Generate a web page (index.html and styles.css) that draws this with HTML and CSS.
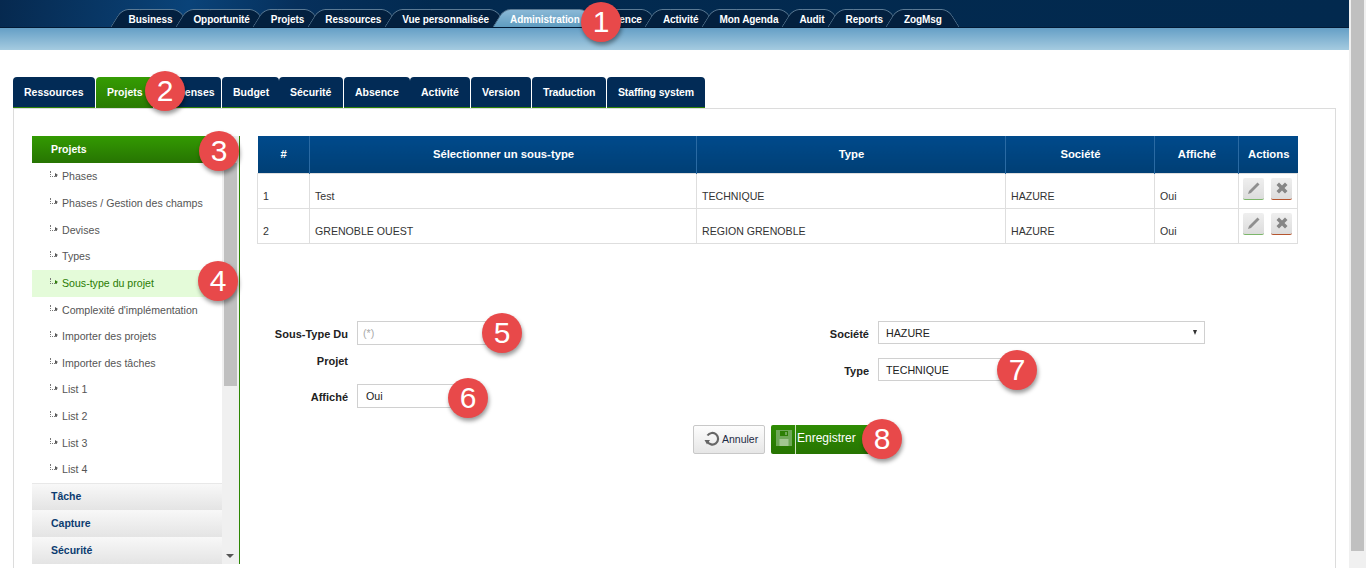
FILE: index.html
```html
<!DOCTYPE html>
<html lang="fr">
<head>
	<meta charset="UTF-8">
	<title>Administration - Sous-type du projet</title>
	<link rel="stylesheet" href="styles.css">
</head>
<body>
	<div class="page">
		<div class="topbar">
			<ul class="mainmenu">
				<li><span>Business</span></li>
				<li><span>Opportunité</span></li>
				<li><span>Projets</span></li>
				<li><span>Ressources</span></li>
				<li><span>Vue personnalisée</span></li>
				<li class="active"><span>Administration</span></li>
				<li><span>Absence</span></li>
				<li><span>Activité</span></li>
				<li><span>Mon Agenda</span></li>
				<li><span>Audit</span></li>
				<li><span>Reports</span></li>
				<li><span>ZogMsg</span></li>
			</ul>
		</div>
		<div class="subbar"></div>

		<ul class="tabs">
			<li class="t-res">Ressources</li>
			<li class="t-pro active">Projets</li>
			<li class="t-dep">Dépenses</li>
			<li class="t-bud">Budget</li>
			<li class="t-sec">Sécurité</li>
			<li class="t-abs">Absence</li>
			<li class="t-act">Activité</li>
			<li class="t-ver">Version</li>
			<li class="t-tra">Traduction</li>
			<li class="t-sta">Staffing system</li>
		</ul>

		<div class="panel">
			<div class="sidebar">
				<div class="side-list">
					<div class="side-head active">Projets</div>
					<ul class="side-items">
						<li>Phases</li>
						<li>Phases / Gestion des champs</li>
						<li>Devises</li>
						<li>Types</li>
						<li class="active">Sous-type du projet</li>
						<li>Complexité d'implémentation</li>
						<li>Importer des projets</li>
						<li>Importer des tâches</li>
						<li>List 1</li>
						<li>List 2</li>
						<li>List 3</li>
						<li>List 4</li>
					</ul>
					<div class="side-head first">Tâche</div>
					<div class="side-head">Capture</div>
					<div class="side-head">Sécurité</div>
				</div>
				<div class="side-scroll">
					<div class="side-thumb"></div>
					<div class="side-arrow"></div>
				</div>
			</div>

			<div class="content">
				<table class="grid">
					<thead>
						<tr>
							<th class="c-num">#</th>
							<th class="c-name">Sélectionner un sous-type</th>
							<th class="c-type">Type</th>
							<th class="c-soc">Société</th>
							<th class="c-aff">Affiché</th>
							<th class="c-act">Actions</th>
						</tr>
					</thead>
					<tbody>
						<tr>
							<td>1</td>
							<td>Test</td>
							<td>TECHNIQUE</td>
							<td>HAZURE</td>
							<td>Oui</td>
							<td class="actions">
								<span class="act edit"><svg width="16" height="16" viewBox="0 0 16 16"><path d="M2 14l1-3 8.500-8.500 2 2L5 13z" fill="#8f8f8f"/></svg></span>
								<span class="act del"><svg width="16" height="16" viewBox="0 0 16 16"><path d="M2.500 5L5 2.500l3 3 3-3L13.500 5l-3 3 3 3-2.500 2.500-3-3-3 3L2.500 11l3-3z" fill="#868686"/></svg></span>
							</td>
						</tr>
						<tr>
							<td>2</td>
							<td>GRENOBLE OUEST</td>
							<td>REGION GRENOBLE</td>
							<td>HAZURE</td>
							<td>Oui</td>
							<td class="actions">
								<span class="act edit"><svg width="16" height="16" viewBox="0 0 16 16"><path d="M2 14l1-3 8.500-8.500 2 2L5 13z" fill="#8f8f8f"/></svg></span>
								<span class="act del"><svg width="16" height="16" viewBox="0 0 16 16"><path d="M2.500 5L5 2.500l3 3 3-3L13.500 5l-3 3 3 3-2.500 2.500-3-3-3 3L2.500 11l3-3z" fill="#868686"/></svg></span>
							</td>
						</tr>
					</tbody>
				</table>

				<div class="form">
					<div class="form-col left">
						<div class="field">
							<label>Sous-Type Du Projet</label>
							<div class="input placeholder w-short">(*)</div>
						</div>
						<div class="field field-aff">
							<label>Affiché</label>
							<div class="input w-short2">Oui</div>
						</div>
					</div>
					<div class="form-col right">
						<div class="field">
							<label>Société</label>
							<div class="input w-long">HAZURE<span class="caret"></span></div>
						</div>
						<div class="field">
							<label>Type</label>
							<div class="input w-type">TECHNIQUE</div>
						</div>
					</div>
				</div>

				<div class="buttons">
					<div class="btn-cancel">
						<svg width="16" height="16" viewBox="0 0 16 16"><path d="M3.200 10.500A5.800 5.800 0 1 0 3.500 4.500" fill="none" stroke="#666" stroke-width="2.200"/><path d="M0.500 9h5.500l-3 4.500z" fill="#666"/></svg>
						Annuler
					</div>
					<div class="btn-save">
						<span class="save-icon"><svg width="16" height="16" viewBox="0 0 16 16"><path d="M0 0h16v16H0z" fill="#6fa858"/><path d="M4 1h8v5H4z" fill="#2d7f05"/><path d="M9 2h2v3H9z" fill="#6fa858"/><path d="M3.500 9h9v7h-9z" fill="#a3c792"/></svg></span>
						<span>Enregistrer</span>
					</div>
				</div>
			</div>
		</div>
	</div>

	<div class="pagescroll"><div class="pagescroll-thumb"></div></div>

	<span class="badge b1">1</span>
	<span class="badge b2">2</span>
	<span class="badge b3">3</span>
	<span class="badge b4">4</span>
	<span class="badge b5">5</span>
	<span class="badge b6">6</span>
	<span class="badge b7">7</span>
	<span class="badge b8">8</span>
</body>
</html>
```

FILE: styles.css
```css
*{
	margin: 0;
	padding: 0;
	box-sizing: border-box;
}
html,body{
	height: 568px;
	overflow: hidden;
}
body{
	font-family: "Liberation Sans", Arial, sans-serif;
	font-size: 11px;
	color: #333;
	background: #fff;
	position: relative;
}
ul{
	list-style: none;
}
.page{
	width: 1349px;
	height: 568px;
	overflow: hidden;
}

/* top menu */
.topbar{
	height: 28px;
	background: linear-gradient(100deg, #06294f 0, #0a4379 14%, #06305c 22%, #022a50 32%, #02294e 100%);
	padding: 9px 0 0 118px;
	border-bottom: 1px solid #021a35;
}
.mainmenu{
	display: flex;
	height: 18px;
}
.mainmenu li{
	position: relative;
	height: 18px;
	line-height: 21px;
	padding: 0 10.500px;
	font-size: 10px;
	letter-spacing: -0.070px;
	font-weight: bold;
	color: #fff;
	white-space: nowrap;
}
.mainmenu li span{
	position: relative;
	z-index: 2;
}
.mainmenu li::before,
.mainmenu li::after{
	content: "";
	position: absolute;
	top: 0;
	bottom: 0;
	width: 60%;
	background: #03203f;
	border-top: 1px solid #5b7a94;
	z-index: 1;
}
.mainmenu li::before{
	left: -2px;
	border-left: 1px solid #5b7a94;
	border-radius: 7px 0 0 0;
	transform: skewX(-32deg);
}
.mainmenu li::after{
	right: -2px;
	border-right: 1px solid #5b7a94;
	border-radius: 0 7px 0 0;
	transform: skewX(32deg);
}
.mainmenu li.active::before,
.mainmenu li.active::after{
	background: linear-gradient(#8ab8d6, #5f9cc0);
}

.subbar{
	height: 22px;
	background: linear-gradient(#659fc6, #a5cbe0);
}

/* second level tabs */
.tabs{
	display: flex;
	margin: 27px 0 0 13px;
	height: 32px;
}
.tabs li{
	height: 31px;
	line-height: 30px;
	padding-left: 11px;
	font-size: 10.500px;
	font-weight: bold;
	color: #fff;
	background: #022b56;
	border-radius: 4px 4px 0 0;
	border-bottom: 1px solid #2d7f05;
	white-space: nowrap;
}
.tabs li.active{
	background: linear-gradient(#359c03, #2a7b02);
}
.t-res{ width: 82px; margin-right: 1px; }
.t-pro{ width: 57px; margin-right: 1px; }
.t-dep{ width: 67px; margin-right: 1px; }
.t-bud{ width: 57px; }
.t-sec{ width: 64px; margin-right: 1px; }
.t-abs{ width: 66px; }
.t-act{ width: 60px; margin-right: 1px; }
.t-ver{ width: 60px; margin-right: 1px; }
.t-tra{ width: 74px; margin-right: 1px; letter-spacing: -0.150px; }
.t-sta{ width: 98px; letter-spacing: -0.150px; }

/* panel */
.panel{
	display: flex;
	width: 1323px;
	height: 480px;
	margin-left: 13px;
	margin-top: -1px;
	border: 1px solid #dcdcdc;
	padding: 27px 0 0 18px;
}
.sidebar{
	display: flex;
	width: 208px;
	height: 428px;
	border-right: 1px solid #2d8604;
	flex: none;
}
.side-list{
	width: 190px;
	flex: none;
}
.side-head{
	height: 27px;
	line-height: 26px;
	padding-left: 19px;
	font-size: 10.500px;
	font-weight: bold;
	color: #0c3c70;
	background: linear-gradient(#f8f8f8, #e4e4e4);
}
.side-head.first{
	border-top: 1px solid #e8e8e8;
	line-height: 25px;
}
.side-head.active{
	color: #fff;
	background: linear-gradient(#339a02, #277402);
}
.side-items{
	padding-top: 0.300px;
}
.side-items li{
	position: relative;
	height: 26.650px;
	line-height: 26.650px;
	padding-left: 30px;
	color: #555;
	font-size: 10.600px;
	white-space: nowrap;
}
.side-items li::before{
	content: "";
	position: absolute;
	left: 18px;
	top: 8px;
	width: 6px;
	height: 5px;
	border-left: 1px dotted #777;
	border-bottom: 1px dotted #777;
}
.side-items li::after{
	content: "";
	position: absolute;
	left: 23px;
	top: 10px;
	border-left: 3px solid #555;
	border-top: 2.500px solid transparent;
	border-bottom: 2.500px solid transparent;
}
.side-items li.active{
	background: #e4fbd9;
	color: #2b7c04;
}
.side-items li.active::after{
	border-left-color: #2b7c04;
}
.side-scroll{
	width: 17px;
	background: #f0f0f0;
	position: relative;
}
.side-thumb{
	height: 223px;
	margin: 27px 2px 0 2px;
	background: #c0c0c0;
}
.side-arrow{
	position: absolute;
	left: 4px;
	bottom: 6px;
	border-top: 4px solid #555;
	border-left: 4px solid transparent;
	border-right: 4px solid transparent;
}

/* right side */
.content{
	width: 1040px;
	margin-left: 17px;
	flex: none;
}
.grid{
	width: 1040px;
	border-collapse: collapse;
	table-layout: fixed;
}
.grid th{
	height: 37px;
	background: linear-gradient(#004a8b, #003f75);
	color: #fff;
	font-size: 11.300px;
	font-weight: bold;
	border-left: 1px solid #2a6aa3;
	padding: 0 0 1px 1px;
}
.grid th:first-child{
	border-left: 0;
}
.c-num{ width: 52px; }
.c-name{ width: 387px; }
.c-type{ width: 309px; }
.c-soc{ width: 149px; }
.c-aff{ width: 84px; }
.c-act{ width: 59px; }
.grid td{
	height: 35px;
	padding: 11px 3px 0 5px;
	border: 1px solid #dedede;
	color: #333;
	font-size: 10.600px;
	white-space: nowrap;
}
.grid td.actions{
	padding: 4px 0 0 4px;
	vertical-align: top;
	font-size: 0;
}
.act{
	display: inline-flex;
	align-items: center;
	justify-content: center;
	width: 21px;
	height: 22px;
	margin-right: 7px;
	background: linear-gradient(#efefef, #dcdcdc);
	border-radius: 2px;
	vertical-align: top;
}
.act.edit{
	border-bottom: 1px solid #7cb66a;
}
.act.del{
	border-bottom: 1px solid #b5552f;
}

/* form */
.form{
	display: flex;
	margin-top: 77px;
	height: 85px;
}
.form-col{
	width: 520px;
	flex: none;
}
.form-col.left{
	width: 521px;
}
.field{
	display: flex;
	align-items: flex-start;
	margin-bottom: 14px;
}
.field label{
	width: 91px;
	padding-top: 6px;
	text-align: right;
	font-size: 11px;
	font-weight: bold;
	line-height: 27px;
	color: #222;
	margin-top: -6px;
	flex: none;
}
.field-aff{
	margin-top: -5px;
}
.right .field{
	margin-bottom: 10px;
}
.input{
	position: relative;
	height: 24px;
	line-height: 23px;
	margin-left: 9px;
	padding-left: 8px;
	border: 1px solid #d0d0d0;
	font-size: 10.700px;
	color: #222;
}
.input.placeholder{
	color: #aaa;
	padding-left: 5px;
}
.w-short{ width: 140px; }
.w-short2{ width: 100px; }
.w-long{ width: 327px; height: 23px; padding-left: 7px; }
.w-type{ width: 130px; height: 23px; padding-left: 7px; }
.caret{
	position: absolute;
	right: 7px;
	top: 8px;
	border-top: 5px solid #333;
	border-left: 2.500px solid transparent;
	border-right: 2.500px solid transparent;
}

/* buttons */
.buttons{
	display: flex;
	justify-content: center;
	gap: 6px;
	margin-top: 19px;
	width: 1050px;
}
.btn-cancel{
	display: flex;
	align-items: center;
	gap: 2px;
	width: 72px;
	height: 29px;
	padding-left: 10px;
	font-size: 10.500px;
	color: #1c2a44;
	background: linear-gradient(#fdfdfd, #e6e6e6);
	border: 1px solid #c8c8c8;
	border-radius: 2px;
}
.btn-save{
	display: flex;
	align-items: center;
	width: 100px;
	height: 29px;
	padding-bottom: 2px;
	font-size: 12px;
	color: #fff;
	background: linear-gradient(#2f8c03, #277402);
	border-radius: 2px;
}
.save-icon{
	display: flex;
	align-items: center;
	justify-content: center;
	width: 25px;
	height: 29px;
	margin: 0 1px -2px 0;
	padding: 0 0 2px 2px;
	border-right: 1px solid #cfe3c2;
}

/* browser scrollbar */
.pagescroll{
	position: absolute;
	top: 0;
	right: 0;
	width: 17px;
	height: 568px;
	background: #f0f0f0;
}
.pagescroll-thumb{
	height: 551px;
	margin: 0 2px;
	background: #c0c0c0;
}

/* numbered callouts */
.badge{
	position: absolute;
	z-index: 5;
	width: 40px;
	height: 40px;
	line-height: 40px;
	text-align: center;
	border-radius: 50%;
	background: #e8494a;
	color: #fff;
	font-size: 30px;
	box-shadow: 1px 3px 4px rgba(0,0,0,0.4);
}
.b1{ left: 581px; top: 2px; }
.b2{ left: 145px; top: 71px; }
.b3{ left: 199px; top: 131px; }
.b4{ left: 198px; top: 261px; }
.b5{ left: 482px; top: 313px; }
.b6{ left: 448px; top: 378px; }
.b7{ left: 997px; top: 350px; }
.b8{ left: 862px; top: 419px; }
```
